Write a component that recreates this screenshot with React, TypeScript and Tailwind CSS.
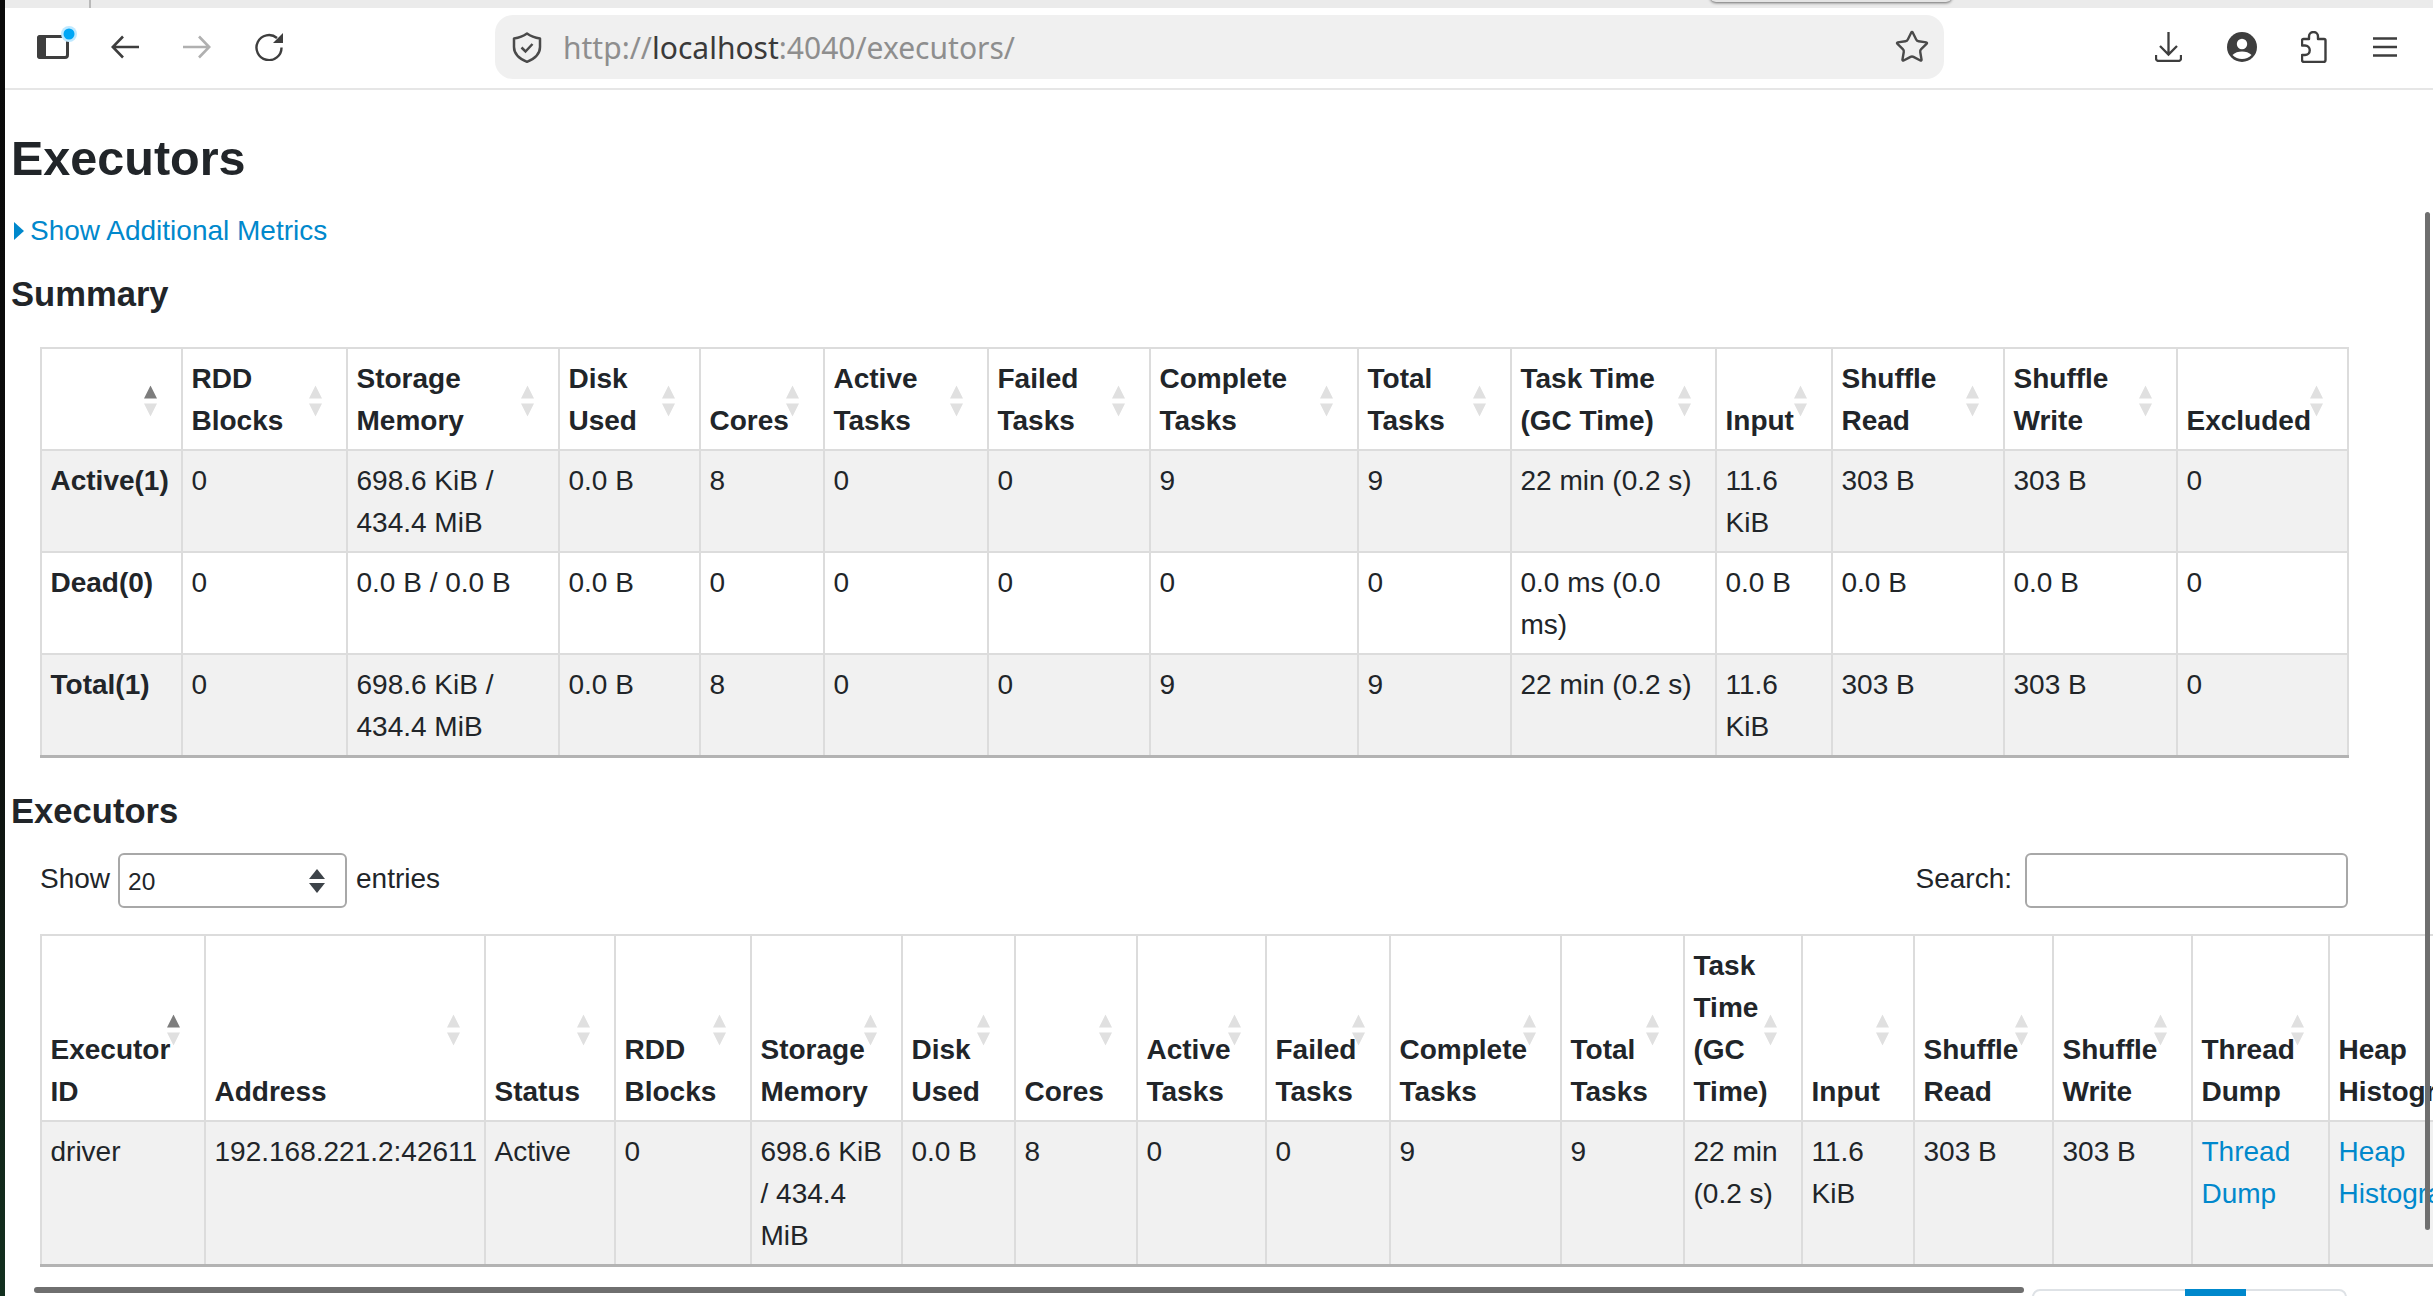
import { Star } from "lucide-react";

// ─────────────────────────────────────────────────────────────────────────────
// Table data – newlines in strings are the wraps in the picture
// ─────────────────────────────────────────────────────────────────────────────
const summaryCols = [
    "w-[141px]", "w-[165px]", "w-[212px]", "w-[141px]", "w-[124px]", "w-[164px]", "w-[162px]",
    "w-[208px]", "w-[153px]", "w-[205px]", "w-[116px]", "w-[172px]", "w-[173px]", "w-[171px]",
];
const summaryHead = [
    "", "RDD\nBlocks", "Storage\nMemory", "Disk\nUsed", "Cores", "Active\nTasks", "Failed\nTasks",
    "Complete\nTasks", "Total\nTasks", "Task Time\n(GC Time)", "Input", "Shuffle\nRead", "Shuffle\nWrite", "Excluded",
];
const summaryRows = [
    ["Active(1)", "0", "698.6 KiB /\n434.4 MiB", "0.0 B", "8", "0", "0", "9", "9", "22 min (0.2 s)", "11.6\nKiB", "303 B", "303 B", "0"],
    ["Dead(0)", "0", "0.0 B / 0.0 B", "0.0 B", "0", "0", "0", "0", "0", "0.0 ms (0.0\nms)", "0.0 B", "0.0 B", "0.0 B", "0"],
    ["Total(1)", "0", "698.6 KiB /\n434.4 MiB", "0.0 B", "8", "0", "0", "9", "9", "22 min (0.2 s)", "11.6\nKiB", "303 B", "303 B", "0"],
];

const execCols = [
    "w-[164px]", "w-[280px]", "w-[130px]", "w-[136px]", "w-[151px]", "w-[113px]", "w-[122px]", "w-[129px]", "w-[124px]",
    "w-[171px]", "w-[123px]", "w-[118px]", "w-[112px]", "w-[139px]", "w-[139px]", "w-[137px]", "w-[230px]",
];
const execHead = [
    "Executor\nID", "Address", "Status", "RDD\nBlocks", "Storage\nMemory", "Disk\nUsed", "Cores", "Active\nTasks", "Failed\nTasks",
    "Complete\nTasks", "Total\nTasks", "Task\nTime\n(GC\nTime)", "Input", "Shuffle\nRead", "Shuffle\nWrite", "Thread\nDump", "Heap\nHistogram",
];
const execRow = [
    "driver", "192.168.221.2:42611", "Active", "0", "698.6 KiB\n/ 434.4\nMiB", "0.0 B", "8", "0", "0", "9", "9",
    "22 min\n(0.2 s)", "11.6\nKiB", "303 B", "303 B",
];

const cellBorder = "border-2 border-[#dcdcdc] px-[8.5px] pt-[9px] pb-[7px]";

function SortIcon({ active }: { active?: boolean }) {
    return (
        <svg width="13" height="31" viewBox="0 0 13 31" className="absolute right-[24px] top-1/2 -translate-y-1/2 mt-[2px]">
            <polygon points="6.5,0 13,13 0,13" fill={active ? "#7d7d7d" : "#e0e0e0"} />
            <polygon points="0,18 13,18 6.5,31" fill="#e0e0e0" />
        </svg>
    );
}

function HeadRow({ labels, sortable }: { labels: string[]; sortable: number }) {
    return (
        <tr>
            {labels.map((label, i) => (
                <th key={i} className={`${cellBorder} relative align-bottom text-left font-bold whitespace-pre-line`}>
                    {label}
                    {i < sortable && <SortIcon active={i === 0} />}
                </th>
            ))}
        </tr>
    );
}

function Toolbar() {
    return (
        <div className="flex items-center h-[82px] shrink-0 border-b-2 border-[#e6e6e6] pb-[2px] bg-white">
            {/* sidebar button */}
            <svg width="42" height="36" viewBox="0 0 42 36" className="ml-[32px] -mr-[10px] overflow-visible">
                <rect x="1.5" y="7.5" width="29" height="21" rx="2.5" fill="none" stroke="#3e3e3e" strokeWidth="3" />
                <rect x="0" y="6" width="9" height="24" rx="3" fill="#3e3e3e" />
                <circle cx="32" cy="5" r="8" fill="#bfe9ff" />
                <circle cx="32" cy="5" r="5.5" fill="#00a6f5" />
            </svg>
            {/* back */}
            <svg width="28" height="24" viewBox="0 0 28 24" fill="none" stroke="#3e3e3e" strokeWidth="2.6" className="ml-[42px]">
                <path d="M28 12H2M12 1.5 1.8 12 12 22.5" />
            </svg>
            {/* forward */}
            <svg width="28" height="24" viewBox="0 0 28 24" fill="none" stroke="#b0b0b0" strokeWidth="2.6" className="ml-[44px]">
                <path d="M0 12h26M16 1.5 26.2 12 16 22.5" />
            </svg>
            {/* reload */}
            <svg width="28" height="28" viewBox="0 0 28 28" fill="none" className="ml-[44px]">
                <path d="M26.5 14.5A12.5 12.5 0 1 1 22 5" stroke="#3e3e3e" strokeWidth="2.4" />
                <polygon points="28,0 28,10 18,10" fill="#3e3e3e" />
            </svg>

            {/* url bar */}
            <div className="ml-[212px] w-[1449px] h-16 rounded-[18px] bg-[#f0f0f0] flex items-center pl-[17px] pr-4">
                <svg width="30" height="31" viewBox="0 0 30 31" fill="none" stroke="#4a4a4a" strokeWidth="2.5">
                    <path d="M15 1.5C19 4.5 23 5.8 28 6.5V15C28 22 22 27 15 29.8 8 27 2 22 2 15V6.5C7 5.8 11 4.5 15 1.5Z" strokeLinejoin="round" />
                    <path d="M9.5 15.5l4 4 7-7.5" />
                </svg>
                <span className="ml-[21px] mt-[2px] font-['Noto_Sans',sans-serif] text-[30px] text-[#8e8e8e] leading-none">
                    http://<span className="text-[#3a3a3a]">localhost</span>:4040/executors/
                </span>
                <Star size={36} strokeWidth={1.6} color="#4a4a4a" className="ml-auto -mr-[2px]" />
            </div>

            {/* download */}
            <svg width="27" height="30" viewBox="0 0 27 30" fill="none" stroke="#3e3e3e" strokeWidth="2.3" className="ml-[211px]">
                <path d="M13.5 0v22M5 14l8.5 8.5L22 14" />
                <path d="M1 23v3.5A2.5 2.5 0 0 0 3.5 29h20a2.5 2.5 0 0 0 2.5-2.5V23" />
            </svg>
            {/* account */}
            <svg width="30" height="30" viewBox="0 0 30 30" className="ml-[45px]">
                <circle cx="15" cy="15" r="15" fill="#3e3e3e" />
                <circle cx="15" cy="12" r="5.2" fill="#fff" />
                <path d="M5.5 23c2.5-2.6 5.6-3.6 9.5-3.6s7 1 9.5 3.6c-2.5 2.6-5.8 4-9.5 4s-7-1.400-9.500-4z" fill="#fff" />
            </svg>
            {/* extensions */}
            <svg width="26" height="32" viewBox="0 0 26 32" fill="none" stroke="#3e3e3e" strokeWidth="2.4" className="ml-[44px]">
                <path d="M3 31a2 2 0 0 1-2-2v-5h3a4.700 4.700 0 0 0 0-9.500H1v-5A1.500 1.500 0 0 1 2.500 8H8V5.500a4.500 4.500 0 0 1 9 0V8h6a1.500 1.500 0 0 1 1.500 1.500V29a2 2 0 0 1-2 2z" strokeLinejoin="round" />
            </svg>
            {/* menu */}
            <svg width="24" height="20" viewBox="0 0 24 20" fill="none" stroke="#3e3e3e" strokeWidth="2.6" className="ml-[46px]">
                <path d="M0 1.500h24M0 10h24M0 18.500h24" />
            </svg>
        </div>
    );
}

export default function App() {
    return (
        <div className="relative flex h-screen w-screen overflow-hidden bg-white text-[#212529] font-['Liberation_Sans',Arial,sans-serif] text-[28px] leading-[42px]">
            <div className="w-[5px] shrink-0 bg-linear-to-b from-[#0a0a0a] via-[#0c0c0c] to-[#12301f]" />

            <div className="flex-1 min-w-0 flex flex-col">
                {/* tab strip */}
                <div className="relative h-2 shrink-0 bg-[#ebebeb]">
                    <div className="absolute left-[84px] top-0 h-2 w-[2px] bg-[#b9b9b9]" />
                    <div className="absolute left-[1705px] -top-2 h-[10px] w-[242px] rounded-b-md bg-[#e4e4e4] shadow-[0_1px_3px_rgba(0,0,0,0.55)]" />
                </div>
                <Toolbar />

                <div className="flex flex-col pl-[6px]">
                    <h1 className="mt-[39px] text-[48.5px] leading-[58px] font-bold">Executors</h1>

                    <div className="mt-[23px] flex items-center text-[#0088cc]">
                        <svg width="10" height="18" viewBox="0 0 10 18" className="ml-[3px] mr-[6px] fill-[#0088cc]">
                            <polygon points="0,0 10,9 0,18" />
                        </svg>
                        <a>Show Additional Metrics</a>
                    </div>

                    <h4 className="mt-[21px] text-[34.6px] font-bold">Summary</h4>

                    {/* summary table */}
                    <table className="mt-[32px] ml-[29px] w-[2307px] table-fixed border-collapse">
                        <colgroup>
                            {summaryCols.map((c, i) => <col key={i} className={c} />)}
                        </colgroup>
                        <thead>
                            <HeadRow labels={summaryHead} sortable={summaryHead.length} />
                        </thead>
                        <tbody>
                            {summaryRows.map((row, r) => (
                                <tr key={r} className={r === 1 ? "bg-white" : "bg-[#f1f1f1]"}>
                                    {row.map((cell, i) => (
                                        <td key={i} className={`${cellBorder} align-top whitespace-pre-line ${i === 0 ? "font-bold" : ""} ${r === 2 ? "border-b-[3px] border-b-[#b3b3b3]" : ""}`}>
                                            {cell}
                                        </td>
                                    ))}
                                </tr>
                            ))}
                        </tbody>
                    </table>

                    <h4 className="mt-[32px] text-[34.6px] font-bold">Executors</h4>

                    {/* length + search row */}
                    <div className="mt-[21px] ml-[29px] w-[2308px] flex items-center h-[55px]">
                        <span className="mb-[3px]">Show</span>
                        <div className="relative ml-2 w-[229px] h-[55px]">
                            <select className="w-full h-full appearance-none rounded-md border-2 border-[#a8a8a8] bg-white pl-2 pt-[2px] text-[24.5px] text-[#212529]">
                                <option>20</option>
                            </select>
                            <svg width="16" height="30" viewBox="0 0 16 30" className="absolute right-[22px] top-[13px] pointer-events-none fill-[#3d4349]">
                                <polygon points="8,3 16,13 0,13" />
                                <polygon points="0,17 16,17 8,27" />
                            </svg>
                        </div>
                        <span className="ml-[9px] mb-[3px]">entries</span>
                        <span className="ml-auto mb-[3px]">Search:</span>
                        <input className="ml-[13px] w-[323px] h-[55px] rounded-md border-2 border-[#a8a8a8] bg-white" />
                    </div>

                    {/* executors table */}
                    <div className="mt-[26px] ml-[29px] overflow-hidden">
                        <table className="w-[2518px] table-fixed border-collapse">
                            <colgroup>
                                {execCols.map((c, i) => <col key={i} className={c} />)}
                            </colgroup>
                            <thead>
                                <HeadRow labels={execHead} sortable={execHead.length - 1} />
                            </thead>
                            <tbody>
                                <tr className="bg-[#f1f1f1]">
                                    {execRow.map((cell, i) => (
                                        <td key={i} className={`${cellBorder} border-b-[3px] border-b-[#b3b3b3] align-top whitespace-pre-line`}>{cell}</td>
                                    ))}
                                    <td className={`${cellBorder} border-b-[3px] border-b-[#b3b3b3] align-top text-[#0088cc]`}>Thread<br />Dump</td>
                                    <td className={`${cellBorder} border-b-[3px] border-b-[#b3b3b3] align-top text-[#0088cc]`}>Heap<br />Histogram</td>
                                </tr>
                            </tbody>
                        </table>
                    </div>

                    {/* pagination, mostly below the fold */}
                    <div className="mt-[22px] ml-[2021px] w-[315px] flex border-2 border-[#dee2e6] rounded-t-lg h-16 shrink-0">
                        <span className="w-[151px] pt-3 text-center text-[#6c757d]">Previous</span>
                        <span className="w-[61px] -mt-[2px] pt-3 text-center bg-[#0088cc] text-white">1</span>
                        <span className="flex-1 pt-3 text-center text-[#6c757d]">Next</span>
                    </div>
                </div>
            </div>

            {/* page scrollbars */}
            <div className="absolute right-[3px] top-[212px] h-[1018px] w-[5px] rounded-full bg-[#6f6f6f]" />
            <div className="absolute left-[34px] top-[1287px] h-[6px] w-[1990px] rounded-full bg-[#6f6f6f]" />
        </div>
    );
}
